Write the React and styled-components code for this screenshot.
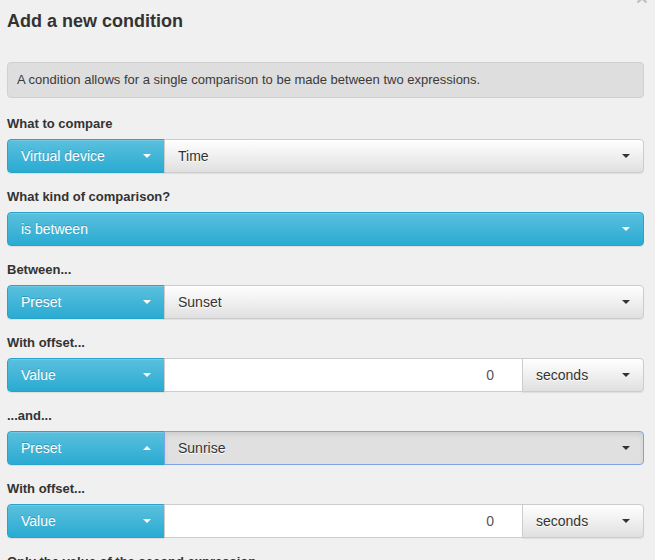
import React from 'react'
import styled, { createGlobalStyle } from 'styled-components'

const Global = createGlobalStyle`
  html, body {
    margin: 0;
    background: #f0f0f0;
  }
  body {
    font-family: "Liberation Sans", Arial, Helvetica, sans-serif;
    font-size: 14px;
    color: #333;
  }
  * { box-sizing: border-box; }
`;

const Modal = styled.div`
  position: relative;
  padding: 11px 11px 0 7px;
  overflow: hidden;
  height: 560px;
`;

const Close = styled.span`
  position: absolute;
  top: -13px;
  right: 7px;
  font-size: 21px;
  font-weight: 700;
  line-height: 1;
  color: #000;
  opacity: 0.2;
`;

const Title = styled.h4`
  margin: 0 0 31px;
  font-size: 18px;
  line-height: 20px;
  font-weight: 700;
  color: #333;
`;

const Well = styled.div`
  margin-bottom: 16px;
  padding: 8px 9px;
  background: #dedede;
  border: 1px solid #d0d0d0;
  border-radius: 4px;
  font-size: 13px;
  line-height: 18px;
  color: #3a3a3a;
`;

const Group = styled.div`
  margin-bottom: 14px;
`;

const Label = styled.div`
  margin-bottom: 5px;
  font-size: 13px;
  line-height: 20px;
  font-weight: 700;
  color: #333;
`;

const Row = styled.div`
  display: flex;
  height: 34px;
`;

const Caret = styled.span`
  display: inline-block;
  width: 0;
  height: 0;
  border-left: 4px solid transparent;
  border-right: 4px solid transparent;
  ${p => (p.$up
    ? 'border-bottom: 4px solid currentColor;'
    : 'border-top: 4px solid currentColor;')}
`;

const Btn = styled.div`
  display: flex;
  align-items: center;
  justify-content: space-between;
  padding: 0 13px;
  font-size: 14px;
  white-space: nowrap;
  border: 1px solid;
  ${p => p.$width ? `width: ${p.$width}px; flex: none;` : 'flex: 1;'}
  border-radius: ${p => p.$radius || '0'};
`;

const InfoBtn = styled(Btn)`
  color: #fff;
  background-image: linear-gradient(to bottom, #5bc0de 0, #2aabd2 100%);
  border-color: #28a4c9;
  text-shadow: 0 -1px 0 rgba(0, 0, 0, 0.2);
  box-shadow: inset 0 1px 0 rgba(255, 255, 255, 0.15), 0 1px 1px rgba(0, 0, 0, 0.075);
`;

const DefaultBtn = styled(Btn)`
  color: #333;
  margin-left: -1px;
  text-shadow: 0 1px 0 #fff;
  ${p => (p.$focus
    ? `
      background: #e0e0e0;
      border-color: #7ba3e6;
      box-shadow: inset 0 3px 5px rgba(0, 0, 0, 0.08);
    `
    : `
      background-image: linear-gradient(to bottom, #fff 0, #e0e0e0 100%);
      border-color: #ccc;
      box-shadow: inset 0 1px 0 rgba(255, 255, 255, 0.15), 0 1px 1px rgba(0, 0, 0, 0.075);
    `)}
`;

const NumberBox = styled.div`
  flex: 1;
  display: flex;
  align-items: center;
  justify-content: flex-end;
  padding-right: 28px;
  margin-left: -1px;
  background: #fff;
  border: 1px solid #ccc;
  color: #555;
  font-size: 14px;
`;

const SelectRow = ({ kind, value, up, focus }) => (
  <Row>
    <InfoBtn $width={158} $radius="4px 0 0 4px">
      {kind}
      <Caret $up={up} />
    </InfoBtn>
    <DefaultBtn $radius="0 4px 4px 0" $focus={focus}>
      {value}
      <Caret />
    </DefaultBtn>
  </Row>
)

const OffsetRow = () => (
  <Row>
    <InfoBtn $width={158} $radius="4px 0 0 4px">
      Value
      <Caret />
    </InfoBtn>
    <NumberBox>0</NumberBox>
    <DefaultBtn $width={122} $radius="0 4px 4px 0">
      seconds
      <Caret />
    </DefaultBtn>
  </Row>
)

export default function App() {
  return (
    <Modal>
      <Global />
      <Close>×</Close>
      <Title>Add a new condition</Title>
      <Well>A condition allows for a single comparison to be made between two expressions.</Well>

      <Group>
        <Label>What to compare</Label>
        <SelectRow kind="Virtual device" value="Time" />
      </Group>

      <Group>
        <Label>What kind of comparison?</Label>
        <Row>
          <InfoBtn $radius="4px">
            is between
            <Caret />
          </InfoBtn>
        </Row>
      </Group>

      <Group>
        <Label>Between...</Label>
        <SelectRow kind="Preset" value="Sunset" />
      </Group>

      <Group>
        <Label>With offset...</Label>
        <OffsetRow />
      </Group>

      <Group>
        <Label>...and...</Label>
        <SelectRow kind="Preset" value="Sunrise" up focus />
      </Group>

      <Group>
        <Label>With offset...</Label>
        <OffsetRow />
      </Group>

      <Group>
        <Label>Only the value of the second expression</Label>
      </Group>
    </Modal>
  )
}
